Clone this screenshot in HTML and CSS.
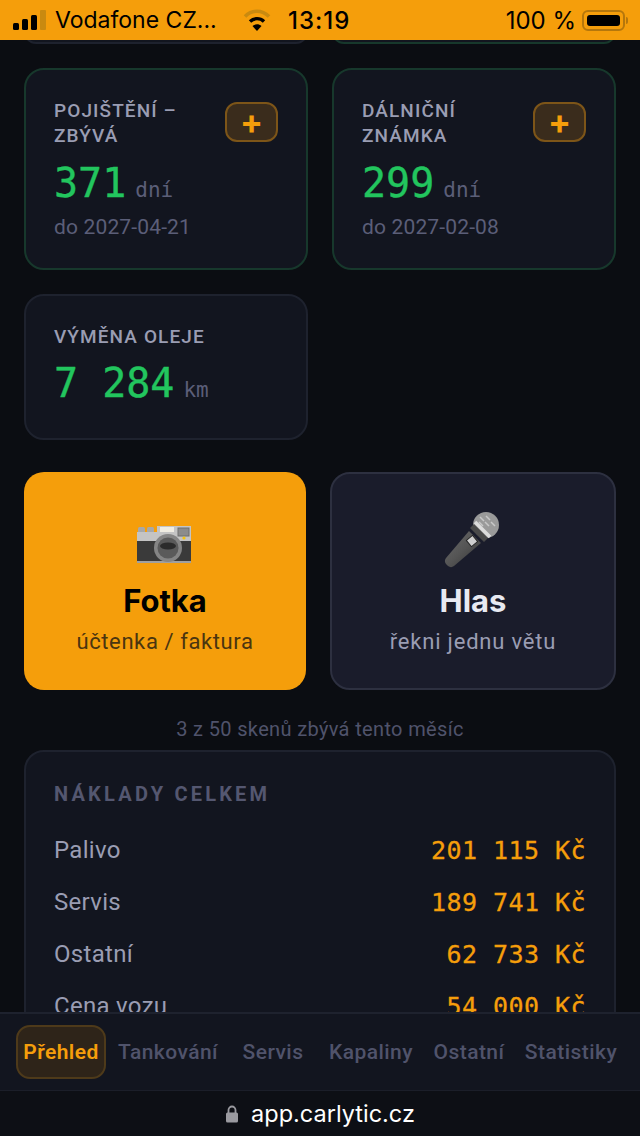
FILE: index.html
```html
<!DOCTYPE html>
<html lang="cs">
<head>
  <meta charset="UTF-8">
  <title>Carlytic</title>
  <link rel="stylesheet" href="styles.css">
</head>
<body>
  <div class="status-bar">
    <svg class="signal" width="34" height="20" viewBox="0 0 34 20">
      <rect x="0" y="13" width="6" height="7" rx="1.5" fill="#000"/>
      <rect x="9" y="9" width="6" height="11" rx="1.5" fill="#000"/>
      <rect x="18" y="5" width="6" height="15" rx="1.5" fill="#000"/>
      <rect x="27" y="0" width="6" height="20" rx="1" fill="#c98a10"/>
    </svg>
    <span class="carrier">Vodafone CZ...</span>
    <svg class="wifi" width="28" height="22" viewBox="0 0 28 22">
      <path d="M2 7.500C9 .5 19 .5 26 7.500" fill="none" stroke="#c98a10" stroke-width="3.600"/>
      <path d="M7 12.500c4-3.800 10-3.800 14 0" fill="none" stroke="#000" stroke-width="3.400"/>
      <path d="M9.500 17l4.500 5 4.500-5c-2.500-2.200-6.500-2.200-9 0z" fill="#000"/>
    </svg>
    <span class="clock">13:19</span>
    <span class="battery-text">100 %</span>
    <span class="battery"><span class="battery-fill"></span></span>
  </div>

  <main class="content">
    <div class="grid stub-row">
      <div class="stub"></div>
      <div class="stub stub-green"></div>
    </div>

    <div class="grid">
      <div class="card card-green">
        <div class="card-head">
          <div class="card-label">POJIŠTĚNÍ – ZBÝVÁ</div>
          <button class="btn-plus">+</button>
        </div>
        <div class="card-value"><span class="num">371</span><span class="unit">dní</span></div>
        <div class="card-date">do 2027-04-21</div>
      </div>
      <div class="card card-green">
        <div class="card-head">
          <div class="card-label">DÁLNIČNÍ ZNÁMKA</div>
          <button class="btn-plus">+</button>
        </div>
        <div class="card-value"><span class="num">299</span><span class="unit">dní</span></div>
        <div class="card-date">do 2027-02-08</div>
      </div>
      <div class="card card-oil">
        <div class="card-label">VÝMĚNA OLEJE</div>
        <div class="card-value"><span class="num">7 284</span><span class="unit">km</span></div>
      </div>
    </div>

    <div class="actions">
      <button class="action action-photo">
        <svg class="action-icon" width="58" height="39" viewBox="0 0 58 39">
          <rect x="2" y="2" width="7" height="7" rx="1.500" fill="#a8a8a8"/>
          <rect x="11" y="2" width="7" height="7" rx="1.500" fill="#a8a8a8"/>
          <path d="M1 7h20V1h34v16H1z" fill="#c4c4c4"/>
          <rect x="24" y="2" width="14" height="5" fill="#efece2"/>
          <rect x="42" y="3" width="11" height="8" fill="#8c8c8c" stroke="#6e6e6e"/>
          <rect x="1" y="16" width="54" height="21" fill="#3a3a3a"/>
          <rect x="1" y="36" width="54" height="2" fill="#a0a0a0"/>
          <circle cx="32" cy="23" r="14" fill="#858585"/>
          <circle cx="32" cy="23" r="10.500" fill="#5a5a5a"/>
          <ellipse cx="32" cy="21" rx="8" ry="3.500" fill="#2b2b2b"/>
          <circle cx="48" cy="13" r="1.600" fill="#f4c20d"/>
        </svg>
        <span class="action-title">Fotka</span>
        <span class="action-sub">účtenka / faktura</span>
      </button>
      <button class="action action-voice">
        <svg class="action-icon" width="60" height="60" viewBox="0 0 60 60">
          <defs>
            <linearGradient id="micBody" x1="0" y1="0" x2="1" y2="1">
              <stop offset="0" stop-color="#6a6a6a"/>
              <stop offset="0.5" stop-color="#555"/>
              <stop offset="1" stop-color="#333"/>
            </linearGradient>
          </defs>
          <path d="M26 21l12 12-27 23c-2 1.500-4 1.500-6 0l-2-2c-1.500-2-1.500-4 0-6z" fill="url(#micBody)"/>
          <rect x="25" y="27" width="8" height="8" transform="rotate(-40 29 31)" fill="#cfcfcf" stroke="#222"/>
          <circle cx="43" cy="15" r="13" fill="#9a9a9a"/>
          <path d="M31 14l14 14 -4 4-14-14z" fill="#4a4a4a"/>
          <path d="M32 12l15 15" stroke="#dcdcdc" stroke-width="3.500"/>
          <path d="M37 7l4 4M43 6l4 4M36 12l4 4M42 12l4 4M48 12l4 4" stroke="#c8c8c8" stroke-width="1.500"/>
        </svg>
        <span class="action-title">Hlas</span>
        <span class="action-sub">řekni jednu větu</span>
      </button>
    </div>

    <p class="scan-note">3 z 50 skenů zbývá tento měsíc</p>

    <section class="costs">
      <h2 class="costs-title">NÁKLADY CELKEM</h2>
      <div class="cost-row"><span>Palivo</span><span class="cost">201 115 Kč</span></div>
      <div class="cost-row"><span>Servis</span><span class="cost">189 741 Kč</span></div>
      <div class="cost-row"><span>Ostatní</span><span class="cost">62 733 Kč</span></div>
      <div class="cost-row"><span>Cena vozu</span><span class="cost">54 000 Kč</span></div>
    </section>
  </main>

  <nav class="tabs">
    <a class="tab tab-active">Přehled</a>
    <a class="tab">Tankování</a>
    <a class="tab">Servis</a>
    <a class="tab">Kapaliny</a>
    <a class="tab">Ostatní</a>
    <a class="tab">Statistiky</a>
  </nav>

  <div class="url-bar">
    <svg width="14" height="18" viewBox="0 0 14 18">
      <path d="M3.500 8V5a3.500 3.500 0 0 1 7 0v3" fill="none" stroke="#9a9aa0" stroke-width="1.800"/>
      <rect x="1" y="7.500" width="12" height="10" rx="1.500" fill="#9a9aa0"/>
    </svg>
    <span>app.carlytic.cz</span>
  </div>
</body>
</html>
```
FILE: styles.css
```css
* { box-sizing: border-box; }
html, body { height: 100%; }
body { margin: 0; height: 1136px; overflow: hidden; display: flex; flex-direction: column; background: #0b0d12; font-family: Roboto, "Noto Sans", sans-serif; }

.status-bar { height: 40px; flex: none; display: flex; align-items: center; padding: 0 15px 0 13px; background: #f59e0b; color: #000; font-family: Inter, Roboto, sans-serif; font-size: 24px; }
.carrier { margin-left: 8px; width: 188px; white-space: nowrap; font-size: 23px; }
.wifi { flex: none; }
.clock { margin-left: 17px; font-weight: 500; letter-spacing: 1px; }
.battery-text { margin-left: auto; margin-right: 6px; }
.battery { position: relative; width: 43px; height: 21px; padding: 3px; border: 2px solid #b5770c; border-radius: 6px; display: block; }
.battery::after { content: ""; position: absolute; right: -5px; top: 5px; width: 2px; height: 7px; background: #b5770c; border-radius: 0 2px 2px 0; }
.battery-fill { display: block; height: 100%; background: #000; border-radius: 3px; }

.content { flex: 1; min-height: 0; overflow: hidden; padding: 0 24px; }
.grid { display: grid; grid-template-columns: 284px 284px; gap: 24px; }
.stub-row { height: 4px; margin-bottom: 24px; }
.stub { height: 24px; margin-top: -20px; border: 2px solid #1e222e; border-radius: 20px; background: #12151f; }
.stub-green { border-color: #17382c; }

.card { background: #12151f; border: 2px solid #1e222e; border-radius: 20px; padding: 28px; }
.card-green { height: 202px; border-color: #17382c; }
.card-oil { height: 146px; }
.card-head { display: flex; justify-content: space-between; align-items: flex-start; height: 52px; }
.card-label { width: 140px; font-size: 19px; line-height: 25px; font-weight: 500; color: #9a9db3; letter-spacing: 1.100px; }
.card-oil .card-label { width: auto; }
.btn-plus { width: 53px; height: 40px; margin: 4px 0 0; padding: 0; border: 2px solid #7d5518; border-radius: 12px; background: #3a2c1c; color: #f59e0b; font-family: Inter, sans-serif; font-size: 34px; font-weight: 700; line-height: 32px; }
.card-value { display: flex; align-items: baseline; margin-top: 8px; color: #22c55e; }
.card-oil .card-value { margin-top: 9px; }
.num { font-family: "DejaVu Sans Mono", monospace; font-size: 40px; line-height: 50px; -webkit-text-stroke: 0.4px; }
.unit { margin-left: 9px; font-family: "DejaVu Sans Mono", monospace; font-size: 21px; color: #5b5e78; }
.card-date { margin-top: 5px; font-size: 21px; line-height: 28px; color: #5b5e78; letter-spacing: 0.150px; }

.actions { display: flex; gap: 24px; margin-top: 32px; }
.action { width: 282px; height: 218px; display: flex; flex-direction: column; align-items: center; padding: 0; border-radius: 20px; font-family: Inter, sans-serif; }
.action-voice { width: 286px; background: #1a1c2b; border: 2px solid #2d3040; color: #e8eaf2; }
.action-photo { background: #f59e0b; border: 0; color: #000; }
.action-icon { display: block; flex: none; }
.action-photo .action-icon { margin-top: 53px; }
.action-voice .action-icon { margin-top: 36px; }
.action-title { font-size: 31px; line-height: 38px; font-weight: 700; }
.action-photo .action-title { margin-top: 18px; }
.action-voice .action-title { margin-top: 12px; }
.action-sub { margin-top: 8px; font-size: 22px; line-height: 28px; font-family: Roboto, sans-serif; letter-spacing: 0.600px; }
.action-photo .action-sub { color: #4a3510; }
.action-voice .action-sub { color: #9a9db3; letter-spacing: 0.800px; }

.scan-note { margin: 26px 0 0; font-size: 20px; line-height: 26px; text-align: center; color: #50536b; letter-spacing: 0.350px; }

.costs { margin-top: 8px; padding: 28px 28px 0; background: #12151f; border: 2px solid #1e222e; border-radius: 20px; height: 400px; }
.costs-title { margin: 0 0 16px; font-size: 20px; line-height: 28px; font-weight: 700; color: #545770; letter-spacing: 3.200px; }
.cost-row { display: flex; justify-content: space-between; align-items: center; height: 52px; font-size: 24px; letter-spacing: 0.300px; color: #9a9db3; }
.cost { font-family: "DejaVu Sans Mono", monospace; font-size: 25px; color: #f59e0b; letter-spacing: 0.450px; white-space: pre; -webkit-text-stroke: 0.3px; }

.tabs { height: 79px; flex: none; display: grid; grid-template-columns: 90px 124px 86px 110px 86px 118px; align-items: center; padding-left: 16px; background: #12151f; border-top: 2px solid #1e222e; border-bottom: 1px solid #1b1e29; }
.tab { font-size: 21px; font-weight: 500; color: #50536b; white-space: nowrap; letter-spacing: 0.450px; text-align: center; }
.tab-active { height: 54px; display: flex; align-items: center; justify-content: center; background: #2e2419; border: 2px solid #4e3a1a; border-radius: 14px; color: #f59e0b; font-weight: 600; }

.url-bar { height: 45px; flex: none; display: flex; align-items: center; justify-content: center; gap: 12px; background: #0d0f15; color: #fff; font-family: Inter, sans-serif; font-size: 23.500px; }
```
